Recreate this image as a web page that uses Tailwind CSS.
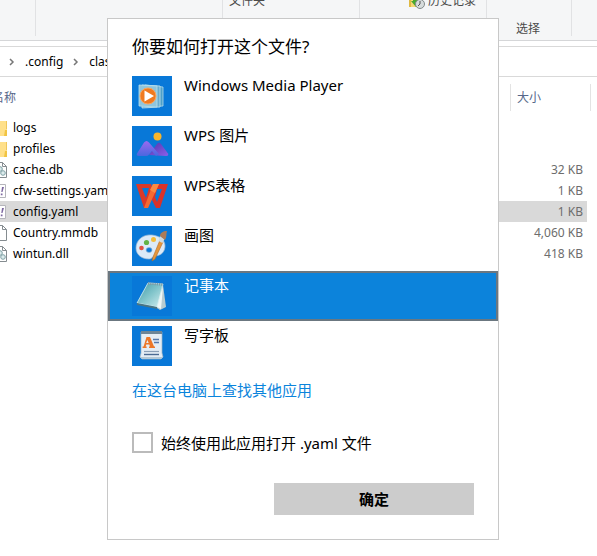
<!DOCTYPE html>
<html lang="zh-CN">
<head>
<meta charset="utf-8">
<meta name="viewport" content="width=device-width, initial-scale=1">
<title>打开方式</title>
<script src="https://cdn.jsdelivr.net/npm/@tailwindcss/browser@4"></script>
</head>
<body class="relative min-h-screen overflow-hidden bg-white font-['Noto_Sans','Noto_Sans_CJK_SC',sans-serif] text-[12px] text-black">

<main>
  <!-- Ribbon -->
  <div class="flex h-[41px] border-b border-[#d5d6d8] bg-[#f5f6f7] leading-4 text-[#4a4a4a]">
    <div class="h-9 w-9 shrink-0 border-r border-[#e1e2e4]"></div>
    <div class="h-9 w-[187px] shrink-0 border-r border-[#e1e2e4]"></div>
    <div class="h-9 w-[137px] shrink-0 border-r border-[#e1e2e4] pl-[6px]"><span class="-mt-[7px] block">文件夹</span></div>
    <div class="h-9 w-[127px] shrink-0 border-r border-[#e1e2e4] pl-[49px]">
      <span class="-mt-[7px] flex gap-[3px]">
        <svg class="h-4 w-4 shrink-0" viewBox="0 0 16 16"><path d="M0 1h12v13H0z" fill="#f5d874"/><path d="M0 14V4h2v10z" fill="#dfb943"/><path d="M4 3h6v5h2l-5 6-5-6h2z" fill="#48a92f"/><circle cx="11" cy="11" r="4.5" fill="#d7dcdc" stroke="#838b8b"/><path d="M11 8v3l-2 2" fill="none" stroke="#555"/></svg>
        历史记录
      </span>
    </div>
    <div class="h-9 w-[85px] shrink-0 border-r border-[#e1e2e4] pt-[21px] pl-[29px]">选择</div>
  </div>

  <!-- Address bar -->
  <nav class="mt-[5px] flex h-[31px] items-center border-y border-[#d9d9d9] pl-[9px]" aria-label="路径">
    <svg class="h-2 w-[6px]" viewBox="0 0 6 8"><path d="M1 1l3 3-3 3" fill="none" stroke="#777" stroke-width="1.5"/></svg>
    <a href="#" class="ml-[10px]">.config</a>
    <svg class="ml-[10px] h-2 w-[6px]" viewBox="0 0 6 8"><path d="M1 1l3 3-3 3" fill="none" stroke="#777" stroke-width="1.5"/></svg>
    <a href="#" class="ml-[10px]">clash</a>
  </nav>

  <!-- File list -->
  <div class="mr-[10px] -ml-[9px]">
    <table class="w-full border-collapse leading-[21px]">
      <thead>
        <tr class="h-10 text-left text-[#56678a]">
          <th class="pl-px font-normal">名称</th>
          <th class="w-[77px] p-0 font-normal"><div class="-mr-1 h-[27px] border-x border-[#e3e3e3] pl-[6px] leading-[27px]">大小</div></th>
        </tr>
      </thead>
      <tbody>
        <tr>
          <td class="p-0"><span class="flex h-[21px] items-center gap-[6px]"><svg class="h-4 w-4" viewBox="0 0 16 16"><path d="M0 1h16v15H0z" fill="#ffe08a"/><path d="M15 1h1v8h-1z" fill="#efc75c"/><path d="M14 10h2v6h-3z" fill="#f1c443"/></svg>logs</span></td>
          <td></td>
        </tr>
        <tr>
          <td class="p-0"><span class="flex h-[21px] items-center gap-[6px]"><svg class="h-4 w-4" viewBox="0 0 16 16"><path d="M0 1h16v15H0z" fill="#ffe08a"/><path d="M15 1h1v8h-1z" fill="#efc75c"/><path d="M14 10h2v6h-3z" fill="#f1c443"/></svg>profiles</span></td>
          <td></td>
        </tr>
        <tr>
          <td class="p-0"><span class="flex h-[21px] items-center gap-[6px]"><svg class="h-4 w-4" viewBox="0 0 16 16"><path d="M1.500 .5h10l4 4v11h-14z" fill="#fff" stroke="#858c90"/><path d="M11.500 .5v4h4" fill="none" stroke="#858c90"/><circle cx="9" cy="7" r="2.300" fill="#dcebec" stroke="#7ea0a4"/><circle cx="12" cy="11" r="2.300" fill="#dcebec" stroke="#7ea0a4"/></svg>cache.db</span></td>
          <td class="p-0 pr-1 text-right text-[#6d6d6d]">32 KB</td>
        </tr>
        <tr>
          <td class="p-0"><span class="flex h-[21px] items-center gap-[6px]"><svg class="h-4 w-4" viewBox="0 0 16 16"><path d="M.5 1.500h14v13H.5z" fill="#fff" stroke="#b5b5bb"/><path d="M11 4h2l-1.500 5h-1.200zM9.800 10.500h1.700v1.700H9.800z" fill="#7c68a0"/></svg>cfw-settings.yaml</span></td>
          <td class="p-0 pr-1 text-right text-[#6d6d6d]">1 KB</td>
        </tr>
        <tr class="bg-[#d9d9d9]">
          <td class="p-0"><span class="flex h-[21px] items-center gap-[6px]"><svg class="h-4 w-4" viewBox="0 0 16 16"><path d="M.5 1.500h14v13H.5z" fill="#fff" stroke="#b5b5bb"/><path d="M11 4h2l-1.500 5h-1.200zM9.800 10.500h1.700v1.700H9.800z" fill="#7c68a0"/></svg>config.yaml</span></td>
          <td class="p-0 pr-1 text-right text-[#6d6d6d]">1 KB</td>
        </tr>
        <tr>
          <td class="p-0"><span class="flex h-[21px] items-center gap-[6px]"><svg class="h-4 w-4" viewBox="0 0 16 16"><path d="M1.500 .5h10l4 4v11h-14z" fill="#fff" stroke="#858c90"/><path d="M11.500 .5v4h4" fill="none" stroke="#858c90"/></svg>Country.mmdb</span></td>
          <td class="p-0 pr-1 text-right text-[#6d6d6d]">4,060 KB</td>
        </tr>
        <tr>
          <td class="p-0"><span class="flex h-[21px] items-center gap-[6px]"><svg class="h-4 w-4" viewBox="0 0 16 16"><path d="M1.500 .5h10l4 4v11h-14z" fill="#fff" stroke="#858c90"/><path d="M11.500 .5v4h4" fill="none" stroke="#858c90"/><circle cx="9" cy="7" r="2.300" fill="#dcebec" stroke="#7ea0a4"/><circle cx="12" cy="11" r="2.300" fill="#dcebec" stroke="#7ea0a4"/></svg>wintun.dll</span></td>
          <td class="p-0 pr-1 text-right text-[#6d6d6d]">418 KB</td>
        </tr>
      </tbody>
    </table>
  </div>
</main>

<!-- Open-with dialog -->
<section role="dialog" aria-labelledby="dlg-title" class="absolute top-[18px] left-[107px] w-[392px] border border-[#c8c8c8] bg-white pb-6 text-[15px] leading-[18px]">
  <h1 id="dlg-title" class="px-6 pt-4 pb-3 text-[17px] leading-6">你要如何打开这个文件?</h1>

  <div role="listbox" aria-label="应用">
    <button role="option" aria-selected="false" class="flex h-[50px] w-full items-start gap-3 px-6 py-[5px] text-left">
      <svg class="h-10 w-10 shrink-0" viewBox="0 0 40 40">
        <rect width="40" height="40" fill="#0878d8"/>
        <path d="M13 9l18 2v19l-18 1z" fill="#4d9fc9" stroke="#b4dceb" stroke-width=".8"/>
        <path d="M10 9l18 1v21l-18 1z" fill="#68adcf" stroke="#c3e3ef" stroke-width=".8"/>
        <path d="M7 9l18 1v21L7 30z" fill="#8fc5dd" stroke="#b9dfec" stroke-width=".8"/>
        <circle cx="16" cy="20" r="8" fill="#f07a20" stroke="#fba65c"/>
        <path d="M12.500 14.500v11l9.500-5.500z" fill="#fff"/>
      </svg>
      <span>Windows Media Player</span>
    </button>
    <button role="option" aria-selected="false" class="flex h-[50px] w-full items-start gap-3 px-6 py-[5px] text-left">
      <svg class="h-10 w-10 shrink-0" viewBox="0 0 40 40">
        <defs>
          <linearGradient id="mt-a" x1="0" y1="0" x2="0" y2="1"><stop offset="0" stop-color="#9a69ef"/><stop offset="1" stop-color="#4968df"/></linearGradient>
          <linearGradient id="mt-b" x1="0" y1="0" x2="1" y2="1"><stop offset="0" stop-color="#5036ad"/><stop offset="1" stop-color="#8b5fea"/></linearGradient>
        </defs>
        <rect width="40" height="40" fill="#0878d8"/>
        <path d="M17 29l8-11q2-2.500 4 0l7 9.500q1 2.500-2 2.500z" fill="url(#mt-b)"/>
        <path d="M7 30q-3 0-2-2.500l7-11q2.500-3 5 0L27 28l-3 2-4-5-3 3.500Q16 30 14 30z" fill="url(#mt-a)"/>
        <circle cx="25.500" cy="10.500" r="4" fill="#f8b52c"/>
      </svg>
      <span>WPS 图片</span>
    </button>
    <button role="option" aria-selected="false" class="flex h-[50px] w-full items-start gap-3 px-6 py-[5px] text-left">
      <svg class="h-10 w-10 shrink-0" viewBox="0 0 40 40">
        <rect width="40" height="40" fill="#0878d8"/>
        <path fill-rule="evenodd" d="M4 8h15l2 5-5 19h-4zM10 12l4 10 3-10z" fill="#db3929"/>
        <path fill-rule="evenodd" d="M24 8h12l-8 24h-4l-5-10 3-8zM25 13l-2 8 2 5 5-13z" fill="#d9322a"/>
        <path d="M21 8h6l-11 24h-4z" fill="#f46a32"/>
        <path d="M21 8h6l-4 9-5-3z" fill="#fa8a42"/>
      </svg>
      <span>WPS表格</span>
    </button>
    <button role="option" aria-selected="false" class="flex h-[50px] w-full items-start gap-3 px-6 py-[5px] text-left">
      <svg class="h-10 w-10 shrink-0" viewBox="0 0 40 40">
        <rect width="40" height="40" fill="#0878d8"/>
        <path fill-rule="evenodd" d="M20 9C11 8 4 14 4 22c0 7 6 11 13 11 3 0 3-2 5-3 8 0 11-5 11-10 0-6-5-10-13-11zm-3 12.500a3 2.500 0 1 0 .1 5 3 2.500 0 0 0-.1-5z" fill="#dceaf7" stroke="#9cb9d6" stroke-width=".7"/>
        <circle cx="9.500" cy="22" r="2.300" fill="#df5144"/><circle cx="14.500" cy="16.500" r="2.600" fill="#62b246"/><circle cx="21.500" cy="13.500" r="2.500" fill="#f2bd3c"/>
        <path d="M28 14l3 2-8 17-3 2 1-4z" fill="#e5973d" stroke="#b56b27" stroke-width=".6"/>
        <path d="M28 10l4.500 3-2 4-4-2z" fill="#cfdbe1"/>
        <path d="M28 10c0-3 3-5 7-5-1 3 0 6-2 9z" fill="#ac7b57"/>
      </svg>
      <span>画图</span>
    </button>
    <button role="option" aria-selected="true" class="flex h-[50px] w-full items-start gap-3 border-2 border-[#6b7780] bg-[#0c83db] px-[22px] py-[3px] text-left text-white">
      <svg class="h-10 w-10 shrink-0" viewBox="0 0 40 40">
        <defs><linearGradient id="np" x1="0" y1="0" x2="1" y2="1"><stop offset="0" stop-color="#3f98a5"/><stop offset=".5" stop-color="#82c5cb"/><stop offset="1" stop-color="#d3eef0"/></linearGradient></defs>
        <rect width="40" height="40" fill="#0878d8"/>
        <path d="M31 9l3 22-6 3-6-4z" fill="#b8cbd0"/>
        <path d="M31 11l-2 22-6-3z" fill="#eef6f6"/>
        <path d="M16 7l15 1-6 23-20-4z" fill="url(#np)" stroke="#d8eff0" stroke-width=".8"/>
        <path d="M5 27l20 4v2L5 29z" fill="#4b7582"/>
        <path d="M16 7.500l15 1" fill="none" stroke="#8199a4" stroke-width="2.500" stroke-dasharray="1.200 1"/>
      </svg>
      <span>记事本</span>
    </button>
    <button role="option" aria-selected="false" class="flex h-[50px] w-full items-start gap-3 px-6 py-[5px] text-left">
      <svg class="h-10 w-10 shrink-0" viewBox="0 0 40 40">
        <rect width="40" height="40" fill="#0878d8"/>
        <path d="M9 6h21v21l1 4-2 2H10l-2-2 1-4z" fill="#e4edf4" stroke="#9cb5c5" stroke-width=".7"/>
        <path d="M9 5h21v3H9z" fill="#6d8596"/>
        <path fill-rule="evenodd" d="M14.500 11h3.500l4 9.500h1V22h-6v-1.500h1l-.7-2h-3l-.7 2h1V22h-4v-1.500h1zm.9 3l-1.200 3h2.500z" fill="#ed7727"/>
        <path d="M21 13.500h6m-5 3h5" stroke="#5679ab" stroke-width="1.300"/>
        <path d="M12 25.500h15" stroke="#8a9fb6" stroke-width="1.200"/><path d="M12 28.500h15" stroke="#4b6b93" stroke-width="1.400"/>
        <path d="M8 31h23l-2 2H10z" fill="#b4c8d5"/>
      </svg>
      <span>写字板</span>
    </button>
  </div>

  <div class="px-6 pt-[10px]">
    <a href="#" class="block text-[#0a84dc]">在这台电脑上查找其他应用</a>
    <label class="mt-[33px] flex items-center gap-2">
      <input type="checkbox" class="h-[21px] w-[21px] shrink-0 appearance-none border-2 border-[#bbbbbb] bg-white">
      <span>始终使用此应用打开 .yaml 文件</span>
    </label>
    <button class="mt-[30px] ml-auto block h-8 w-[200px] bg-[#cccccc] font-semibold">确定</button>
  </div>
</section>
</body>
</html>
